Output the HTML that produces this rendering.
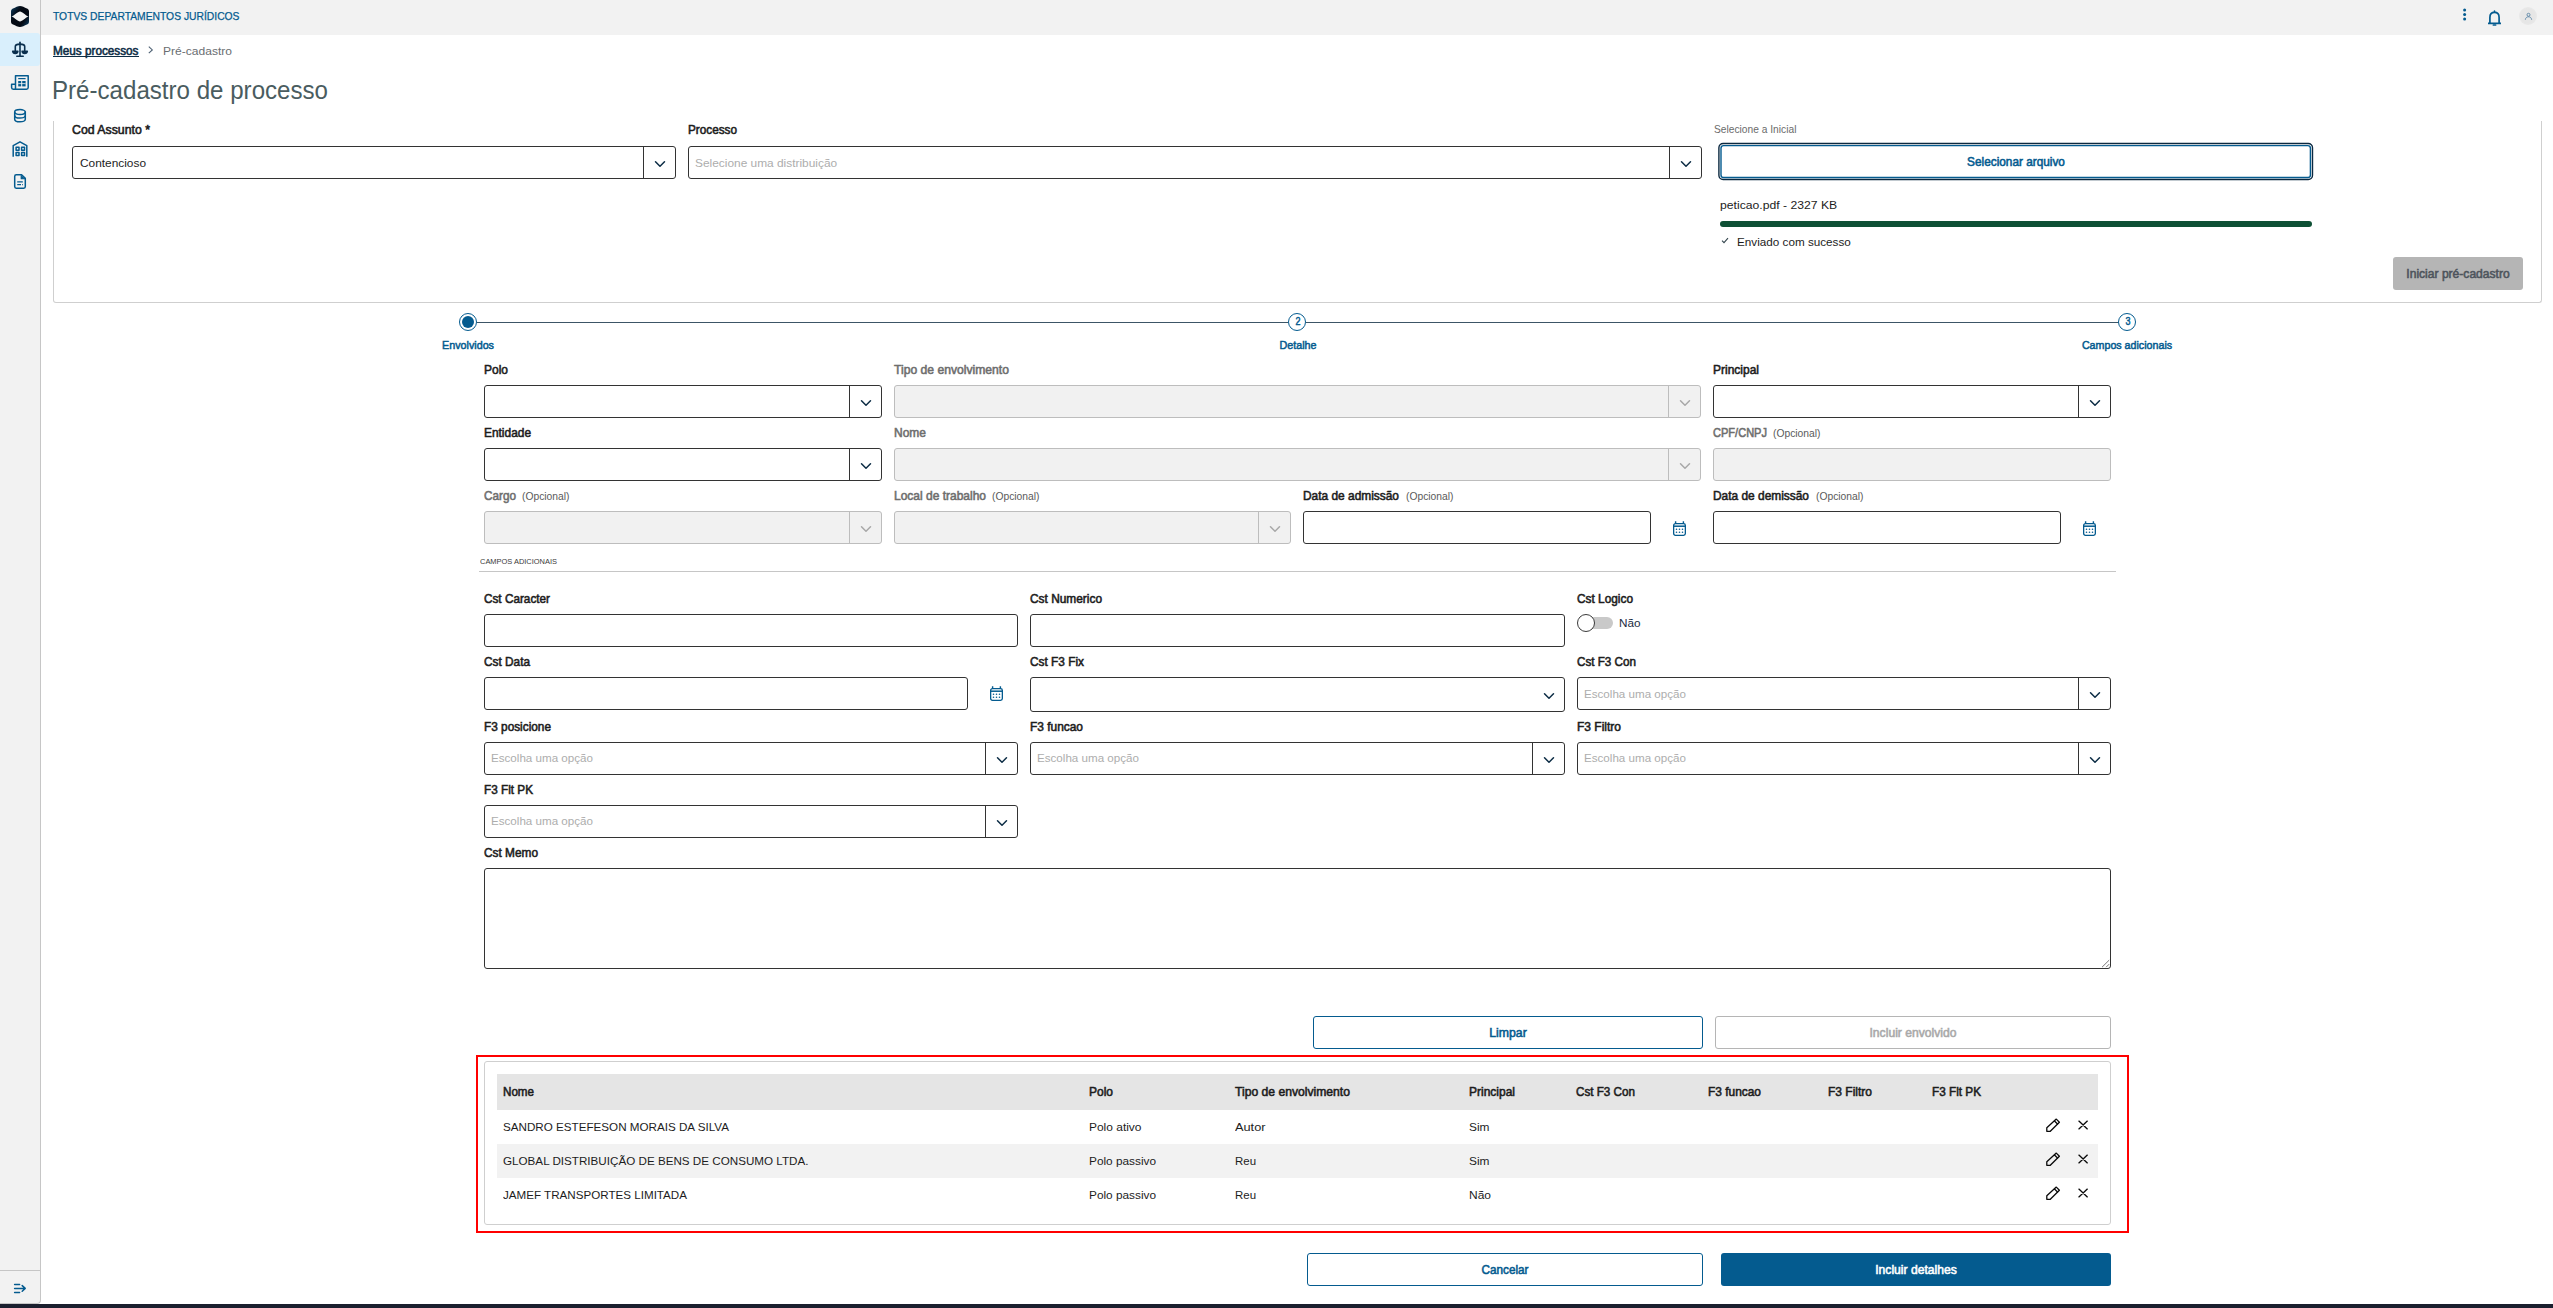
<!DOCTYPE html>
<html lang="pt-BR"><head><meta charset="utf-8"><title>Pré-cadastro de processo</title>
<style>
html,body{margin:0;padding:0}
body{width:2553px;height:1308px;position:relative;overflow:hidden;background:#fff;font-family:"Liberation Sans", sans-serif;}
div,svg,span{position:absolute;box-sizing:border-box}
.ic{overflow:visible}
.t{white-space:nowrap;line-height:20px;transform-origin:0 0}
.hdr{left:0;top:0;width:2553px;height:35px;background:#f2f2f2}
.side{left:0;top:0;width:41px;height:1304px;background:#f2f2f2;border-right:1px solid #c6c6c6;border-bottom:1px solid #c6c6c6;border-bottom-right-radius:4px}
.sideline{display:none}
.act{left:0;top:33px;width:40px;height:33px;background:#d9effc;border-radius:0 3px 3px 0}
.sidehr{left:0;top:1270px;width:40px;height:1px;background:#c6c6c6}
.botbar{left:0;top:1304px;width:2553px;height:4px;background:#1a1f2e}
.avatar{left:2519px;top:7px;width:18px;height:18px;border-radius:50%;background:radial-gradient(circle,#e6e6e6 55%,#eeeeee 100%)}
.panel{left:53px;top:121px;width:2489px;height:182px;border:1px solid #cfcfcf;border-top:none;border-radius:0 0 3px 3px}
.inp{border:1px solid #333;border-radius:3px;background:#fff}
.inp.dis{border-color:#bdbdbd;background:#f1f1f1}
.sep{width:1px;background:#333}
.sepd{background:#bdbdbd}
.btnfocus{border:1px solid #045b8f;border-radius:4px;background:#fff;box-shadow:inset 0 0 0 1px #fff, inset 0 0 0 2px #0c2c45}
.prog{left:1720px;top:221px;width:592px;height:6px;border-radius:3px;background:#0e5035}
.btngray{background:#b5b5b5;border-radius:3px}
.stepline{top:322px;height:1px;background:#3c5566}
.stepc{width:18px;height:18px;border-radius:50%;border:1px solid #045b8f;background:#fff}
.stepfill{left:2px;top:2px;width:12px;height:12px;border-radius:50%;background:#045b8f}
.hr{height:1px;background:#c6c6c6}
.swtrack{left:1588px;top:617px;width:25px;height:12px;border-radius:6px;background:#c9c9c9}
.swknob{left:1577px;top:614px;width:18px;height:18px;border-radius:50%;background:#fff;border:1px solid #3a3a3a}
.btnout{border:1px solid #045b8f;border-radius:3px;background:#fff}
.btnoutd{border-color:#b5b5b5}
.btnpri{background:#045b8f;border-radius:3px}
.red{left:476px;top:1055px;width:1653px;height:178px;border:2px solid #ff0000}
.tblbox{left:484px;top:1061px;width:1627px;height:164px;border:1px solid #cfcfcf;border-radius:3px}
.th{left:497px;top:1074px;width:1601px;height:36px;background:#e5e5e5}
.tr2{left:497px;top:1144px;width:1601px;height:34px;background:#f2f2f2}
</style></head>
<body>
<section aria-label="Layout">
<div class="hdr"></div>
<div class="side"></div>
<div class="act"></div>
<div class="sidehr"></div>
<div class="botbar"></div>
</section>
<nav aria-label="Menu">
<svg class="ic" style="left:10px;top:5px" width="20" height="23" viewBox="0 0 20 23"><linearGradient id="lg" x1="0" y1="0.1" x2="1" y2="0.9"><stop offset="0" stop-color="#0b3a5c"/><stop offset="0.33" stop-color="#040a14"/><stop offset="0.72" stop-color="#040a14"/><stop offset="1" stop-color="#0b3a5c"/></linearGradient><path d="M1 6.5 C1 4.8 1.6 4 3 3.4 C5.5 2.3 8 0.9 10 0.9 C12 0.9 14.5 2.3 17 3.4 C18.4 4 19 4.8 19 6.5 V16.5 C19 18.2 18.4 19 17 19.6 C14.5 20.7 12 22.1 10 22.1 C8 22.1 5.5 20.7 3 19.6 C1.6 19 1 18.2 1 16.5 Z" fill="url(#lg)"/><path d="M1.5 11.4 C5 10 7.6 6.5 10 6.4 C12.4 6.5 15 10 18.5 11.4 C15 12.8 12.4 16.3 10 16.4 C7.6 16.3 5 12.8 1.5 11.4 Z" fill="#f4f4f4"/></svg>
<svg class="ic" style="left:11px;top:41px" width="18" height="17" viewBox="0 0 18 17" fill="none" stroke="#0a2f4d" stroke-width="1.6" stroke-linecap="round" stroke-linejoin="round"><path d="M9 1.2 V15"/><path d="M5.8 15.3 H12.2"/><path d="M4.3 9.6 V5.6 C4.3 3.8 6 3.1 9 3.1 C12 3.1 13.7 3.8 13.7 5.6 V9.6"/><path d="M1.7 10.2 H6.9 C6.7 11.7 5.6 12.4 4.3 12.4 C3 12.4 1.9 11.7 1.7 10.2 Z" fill="#0a2f4d"/><path d="M11.1 10.2 H16.3 C16.1 11.7 15 12.4 13.7 12.4 C12.4 12.4 11.3 11.7 11.1 10.2 Z" fill="#0a2f4d"/></svg>
<svg class="ic" style="left:10px;top:74px" width="20" height="17" viewBox="0 0 20 17" fill="none" stroke="#045b8f" stroke-width="1.5" stroke-linejoin="round"><path d="M5.5 15.2 V1.8 H18.2 V13.5 C18.2 14.6 17.5 15.2 16.5 15.2 H3.2 C2.2 15.2 1.6 14.6 1.6 13.6 V10.2 H5.5"/><path d="M8.2 4.6 H15.6" stroke-width="1.2"/><rect x="8.2" y="7" width="3" height="5.4" fill="#045b8f" stroke="none"/><rect x="12.2" y="7" width="3.4" height="5.4" fill="#045b8f" stroke="none"/><path d="M8.2 9.6 H15.6" stroke="#f2f2f2" stroke-width=".8"/></svg>
<svg class="ic" style="left:13px;top:108px" width="14" height="15" viewBox="0 0 14 15" fill="none" stroke="#045b8f" stroke-width="1.5"><ellipse cx="7" cy="4.1" rx="5.3" ry="2.5"/><path d="M1.7 4.1 V11.2 C1.7 12.7 4 13.8 7 13.8 C10 13.8 12.3 12.7 12.3 11.2 V3.6"/><path d="M1.7 7.4 C1.7 8.9 4 10 7 10 C10 10 12.3 8.9 12.3 7.4"/></svg>
<svg class="ic" style="left:11px;top:140px" width="18" height="18" viewBox="0 0 18 18" fill="none" stroke="#045b8f" stroke-width="1.5" stroke-linejoin="round"><path d="M2.2 16.8 V5.6 L9 1.8 L15.8 5.6 V16.8"/><rect x="5.1" y="7.3" width="2.9" height="2.9"/><rect x="10.6" y="7.3" width="2.9" height="2.9"/><rect x="5.1" y="12.6" width="2.9" height="2.9"/><rect x="10.6" y="12.6" width="2.9" height="2.9"/></svg>
<svg class="ic" style="left:13px;top:173px" width="14" height="17" viewBox="0 0 14 17" fill="none" stroke="#045b8f" stroke-width="1.5" stroke-linejoin="round"><path d="M3.2 1.8 H8.6 L12.3 5.4 V13.6 C12.3 14.6 11.7 15.2 10.8 15.2 H3.2 C2.3 15.2 1.7 14.6 1.7 13.6 V3.4 C1.7 2.4 2.3 1.8 3.2 1.8 Z"/><path d="M8.2 2.2 V5.8 H12" stroke-width="1.1" fill="#045b8f"/><path d="M4.2 8.8 H9.8 M4.2 11.6 H8 M9 11.6 H9.8" stroke-width="1.3"/></svg>
<svg class="ic" style="left:13px;top:1282px" width="14" height="13" viewBox="0 0 14 13" fill="none" stroke="#045b8f" stroke-width="1.5" stroke-linecap="round" stroke-linejoin="round"><path d="M1.6 2.4 H6.6 M1.6 6.4 H12 M1.6 10.4 H6.6 M9.2 3.6 L12.2 6.4 L9.2 9.2"/></svg>
</nav>
<header>
<svg class="ic" style="left:2460px;top:7px" width="10" height="16" viewBox="0 0 10 16" fill="#045b8f"><circle cx="4.6" cy="2.9" r="1.5"/><circle cx="4.6" cy="7.5" r="1.5"/><circle cx="4.6" cy="12.1" r="1.5"/></svg>
<svg class="ic" style="left:2486px;top:8.6px" width="17" height="19" viewBox="0 0 17 19" fill="none" stroke="#045b8f" stroke-width="1.7" stroke-linejoin="round"><path d="M2 14.4 H15 M3.9 14.4 V8.4 C3.9 5.4 5.8 3.4 8.5 3.4 C11.2 3.4 13.1 5.4 13.1 8.4 V14.4"/><path d="M8.5 3.2 V2.2 M7.4 16 H9.6" stroke-linecap="round"/></svg>
<div class="avatar"></div><svg class="ic" style="left:2524px;top:12px" width="9" height="9" viewBox="0 0 9 9" fill="none" stroke="#3a6f98" stroke-width="0.7"><circle cx="4.5" cy="2.8" r="1.5"/><path d="M1.3 7.8 C1.6 5.6 3 4.8 4.5 4.8 C6 4.8 7.4 5.6 7.7 7.8"/></svg>
<span class="t" style="left:53px;top:6px;font-size:11.5px;color:#045b8f;transform:scaleX(0.8971);-webkit-text-stroke:0.25px #045b8f">TOTVS DEPARTAMENTOS JURÍDICOS</span>
</header>
<nav aria-label="Breadcrumb">
<div style="left:53px;top:56px;width:86px;height:1px;background:#0c2c45"></div>
<svg class="ic" style="left:147px;top:45px" width="7" height="10" viewBox="0 0 7 10" fill="none" stroke="#4f6275" stroke-width="1.1"><path d="M1.8 1.6 L5.3 4.9 L1.8 8.2"/></svg>
<span class="t" style="left:53px;top:41px;font-size:12px;color:#0c2c45;-webkit-text-stroke:0.55px #0c2c45;transform:scaleX(0.9785);">Meus processos</span>
<span class="t" style="left:163px;top:41px;font-size:11px;color:#6a6e72;transform:scaleX(1.0955);">Pré-cadastro</span>
</nav>
<main>

<span class="t" style="left:52.4px;top:80px;font-size:26.5px;color:#4a5c60;transform:scaleX(0.9096);">Pré-cadastro de processo</span>
</main>
<section aria-label="Pré-cadastro">
<div class="panel"></div>
<div class="inp" style="left:72px;top:146px;width:604px;height:33px"></div>
<div class="sep" style="left:643px;top:147px;height:31px"></div>
<svg class="ic" style="left:653.5px;top:159.5px" width="12" height="8" viewBox="0 0 12 8" fill="none" stroke="#0c2c45" stroke-width="1.5" stroke-linecap="round" stroke-linejoin="round"><path d="M1.5 1.7 L6 6.2 L10.5 1.7"/></svg>
<div class="inp" style="left:688px;top:146px;width:1014px;height:33px"></div>
<div class="sep" style="left:1669px;top:147px;height:31px"></div>
<svg class="ic" style="left:1679.5px;top:159.5px" width="12" height="8" viewBox="0 0 12 8" fill="none" stroke="#0c2c45" stroke-width="1.5" stroke-linecap="round" stroke-linejoin="round"><path d="M1.5 1.7 L6 6.2 L10.5 1.7"/></svg>
<svg class="ic" style="left:1716px;top:141px" width="600" height="42" viewBox="1716 141 600 42" fill="none"><rect x="1718.9" y="143.5" width="593.6" height="36.05" rx="4.2" stroke="#0b2840" stroke-width="1.4" fill="#fff"/><rect x="1721" y="145.6" width="589.4" height="31.95" rx="2.6" stroke="#045b8f" stroke-width="1.4"/></svg>
<div class="prog"></div>
<svg class="ic" style="left:1721px;top:237px" width="8" height="7" viewBox="0 0 8 7" fill="none" stroke="#33454d" stroke-width="1.1"><path d="M1 3.6 L3 5.6 L7 1.2"/></svg>
<div class="btngray" style="left:2393px;top:257px;width:130px;height:33px"></div>
<span class="t" style="left:72px;top:120px;font-size:12px;color:#1d1d1d;-webkit-text-stroke:0.55px #1d1d1d;transform:scaleX(1.0255);">Cod Assunto *</span>
<span class="t" style="left:79.5px;top:153px;font-size:11.5px;color:#1d1d1d;transform:scaleX(1.0323);">Contencioso</span>
<span class="t" style="left:688px;top:120px;font-size:12px;color:#1d1d1d;-webkit-text-stroke:0.55px #1d1d1d;transform:scaleX(0.9794);">Processo</span>
<span class="t" style="left:695px;top:153px;font-size:11.5px;color:#adadad;transform:scaleX(1.0345);">Selecione uma distribuição</span>
<span class="t" style="left:1714px;top:119px;font-size:11.5px;color:#6b6b6b;transform:scaleX(0.8889);">Selecione a Inicial</span>
<span class="t" style="left:2015.8px;top:152px;font-size:12px;color:#045b8f;-webkit-text-stroke:0.55px #045b8f;transform:translateX(-50%) scaleX(0.9838);transform-origin:50% 0;">Selecionar arquivo</span>
<span class="t" style="left:1720.3px;top:195px;font-size:11px;color:#1d1d1d;transform:scaleX(1.1078);">peticao.pdf - 2327 KB</span>
<span class="t" style="left:1737px;top:232px;font-size:11px;color:#1d1d1d;transform:scaleX(1.0636);">Enviado com sucesso</span>
<span class="t" style="left:2458px;top:264px;font-size:12px;color:#4d545c;-webkit-text-stroke:0.55px #4d545c;transform:translateX(-50%) scaleX(1.0066);transform-origin:50% 0;">Iniciar pré-cadastro</span>
</section>
<section aria-label="Etapas">
<div class="stepline" style="left:477px;width:811px"></div>
<div class="stepline" style="left:1306px;width:813px"></div>
<div class="stepc" style="left:459px;top:313px"><div class="stepfill"></div></div>
<div class="stepc" style="left:1288px;top:313px"></div>
<div class="stepc" style="left:2118px;top:313px"></div>
<span class="t" style="left:1297.6px;top:312px;font-size:10px;color:#045b8f;-webkit-text-stroke:0.46px #045b8f;transform:translateX(-50%) scaleX(0.8989);transform-origin:50% 0;">2</span>
<span class="t" style="left:2127.6px;top:312px;font-size:10px;color:#045b8f;-webkit-text-stroke:0.46px #045b8f;transform:translateX(-50%) scaleX(0.8989);transform-origin:50% 0;">3</span>
<span class="t" style="left:468px;top:335px;font-size:11px;color:#045b8f;-webkit-text-stroke:0.50px #045b8f;transform:translateX(-50%) scaleX(0.9774);transform-origin:50% 0;">Envolvidos</span>
<span class="t" style="left:1297.5px;top:335px;font-size:11px;color:#045b8f;-webkit-text-stroke:0.50px #045b8f;transform:translateX(-50%) scaleX(0.9757);transform-origin:50% 0;">Detalhe</span>
<span class="t" style="left:2127.1px;top:335px;font-size:11px;color:#045b8f;-webkit-text-stroke:0.50px #045b8f;transform:translateX(-50%) scaleX(0.9705);transform-origin:50% 0;">Campos adicionais</span>
</section>
<form>
<div class="inp" style="left:484px;top:385px;width:398px;height:33px"></div>
<div class="sep" style="left:849px;top:386px;height:31px"></div>
<svg class="ic" style="left:859.5px;top:398.5px" width="12" height="8" viewBox="0 0 12 8" fill="none" stroke="#0c2c45" stroke-width="1.5" stroke-linecap="round" stroke-linejoin="round"><path d="M1.5 1.7 L6 6.2 L10.5 1.7"/></svg>
<div class="inp dis" style="left:894px;top:385px;width:807px;height:33px"></div>
<div class="sep sepd" style="left:1668px;top:386px;height:31px"></div>
<svg class="ic" style="left:1678.5px;top:398.5px" width="12" height="8" viewBox="0 0 12 8" fill="none" stroke="#a8a8a8" stroke-width="1.5" stroke-linecap="round" stroke-linejoin="round"><path d="M1.5 1.7 L6 6.2 L10.5 1.7"/></svg>
<div class="inp" style="left:1713px;top:385px;width:398px;height:33px"></div>
<div class="sep" style="left:2078px;top:386px;height:31px"></div>
<svg class="ic" style="left:2088.5px;top:398.5px" width="12" height="8" viewBox="0 0 12 8" fill="none" stroke="#0c2c45" stroke-width="1.5" stroke-linecap="round" stroke-linejoin="round"><path d="M1.5 1.7 L6 6.2 L10.5 1.7"/></svg>
<div class="inp" style="left:484px;top:448px;width:398px;height:33px"></div>
<div class="sep" style="left:849px;top:449px;height:31px"></div>
<svg class="ic" style="left:859.5px;top:461.5px" width="12" height="8" viewBox="0 0 12 8" fill="none" stroke="#0c2c45" stroke-width="1.5" stroke-linecap="round" stroke-linejoin="round"><path d="M1.5 1.7 L6 6.2 L10.5 1.7"/></svg>
<div class="inp dis" style="left:894px;top:448px;width:807px;height:33px"></div>
<div class="sep sepd" style="left:1668px;top:449px;height:31px"></div>
<svg class="ic" style="left:1678.5px;top:461.5px" width="12" height="8" viewBox="0 0 12 8" fill="none" stroke="#a8a8a8" stroke-width="1.5" stroke-linecap="round" stroke-linejoin="round"><path d="M1.5 1.7 L6 6.2 L10.5 1.7"/></svg>
<div class="inp dis" style="left:1713px;top:448px;width:398px;height:33px"></div>
<div class="inp dis" style="left:484px;top:511px;width:398px;height:33px"></div>
<div class="sep sepd" style="left:849px;top:512px;height:31px"></div>
<svg class="ic" style="left:859.5px;top:524.5px" width="12" height="8" viewBox="0 0 12 8" fill="none" stroke="#a8a8a8" stroke-width="1.5" stroke-linecap="round" stroke-linejoin="round"><path d="M1.5 1.7 L6 6.2 L10.5 1.7"/></svg>
<div class="inp dis" style="left:894px;top:511px;width:397px;height:33px"></div>
<div class="sep sepd" style="left:1258px;top:512px;height:31px"></div>
<svg class="ic" style="left:1268.5px;top:524.5px" width="12" height="8" viewBox="0 0 12 8" fill="none" stroke="#a8a8a8" stroke-width="1.5" stroke-linecap="round" stroke-linejoin="round"><path d="M1.5 1.7 L6 6.2 L10.5 1.7"/></svg>
<div class="inp" style="left:1303px;top:511px;width:348px;height:33px"></div>
<svg class="ic" style="left:1672px;top:520px" width="15" height="17" viewBox="0 0 15 17" fill="none" stroke="#045b8f" stroke-width="1.3"><rect x="1.65" y="3.65" width="11.7" height="11.7" rx="1.8"/><path d="M1.4 6.2 H13.6" stroke-width="1.5"/><path d="M3.6 1.2 V3.4 M11.4 1.2 V3.4" stroke-width="1.4"/><g fill="#045b8f" stroke="none"><circle cx="4.5" cy="9.2" r=".8"/><circle cx="7.5" cy="9.2" r=".8"/><circle cx="10.5" cy="9.2" r=".8"/><circle cx="4.5" cy="12.3" r=".8"/><circle cx="7.5" cy="12.3" r=".8"/><circle cx="10.5" cy="12.3" r=".8"/></g></svg>
<div class="inp" style="left:1713px;top:511px;width:348px;height:33px"></div>
<svg class="ic" style="left:2082px;top:520px" width="15" height="17" viewBox="0 0 15 17" fill="none" stroke="#045b8f" stroke-width="1.3"><rect x="1.65" y="3.65" width="11.7" height="11.7" rx="1.8"/><path d="M1.4 6.2 H13.6" stroke-width="1.5"/><path d="M3.6 1.2 V3.4 M11.4 1.2 V3.4" stroke-width="1.4"/><g fill="#045b8f" stroke="none"><circle cx="4.5" cy="9.2" r=".8"/><circle cx="7.5" cy="9.2" r=".8"/><circle cx="10.5" cy="9.2" r=".8"/><circle cx="4.5" cy="12.3" r=".8"/><circle cx="7.5" cy="12.3" r=".8"/><circle cx="10.5" cy="12.3" r=".8"/></g></svg>
<div class="hr" style="left:479px;top:571px;width:1637px"></div>
<div class="inp" style="left:484px;top:614px;width:534px;height:33px"></div>
<div class="inp" style="left:1030px;top:614px;width:535px;height:33px"></div>
<div class="swtrack"></div><div class="swknob"></div>
<div class="inp" style="left:484px;top:677px;width:484px;height:33px"></div>
<svg class="ic" style="left:989px;top:685px" width="15" height="17" viewBox="0 0 15 17" fill="none" stroke="#045b8f" stroke-width="1.3"><rect x="1.65" y="3.65" width="11.7" height="11.7" rx="1.8"/><path d="M1.4 6.2 H13.6" stroke-width="1.5"/><path d="M3.6 1.2 V3.4 M11.4 1.2 V3.4" stroke-width="1.4"/><g fill="#045b8f" stroke="none"><circle cx="4.5" cy="9.2" r=".8"/><circle cx="7.5" cy="9.2" r=".8"/><circle cx="10.5" cy="9.2" r=".8"/><circle cx="4.5" cy="12.3" r=".8"/><circle cx="7.5" cy="12.3" r=".8"/><circle cx="10.5" cy="12.3" r=".8"/></g></svg>
<div class="inp" style="left:1030px;top:677px;width:535px;height:35px"></div>
<svg class="ic" style="left:1542.5px;top:691.5px" width="12" height="8" viewBox="0 0 12 8" fill="none" stroke="#0c2c45" stroke-width="1.5" stroke-linecap="round" stroke-linejoin="round"><path d="M1.5 1.7 L6 6.2 L10.5 1.7"/></svg>
<div class="inp" style="left:1577px;top:677px;width:534px;height:33px"></div>
<div class="sep" style="left:2078px;top:678px;height:31px"></div>
<svg class="ic" style="left:2088.5px;top:690.5px" width="12" height="8" viewBox="0 0 12 8" fill="none" stroke="#0c2c45" stroke-width="1.5" stroke-linecap="round" stroke-linejoin="round"><path d="M1.5 1.7 L6 6.2 L10.5 1.7"/></svg>
<div class="inp" style="left:484px;top:742px;width:534px;height:33px"></div>
<div class="sep" style="left:985px;top:743px;height:31px"></div>
<svg class="ic" style="left:995.5px;top:755.5px" width="12" height="8" viewBox="0 0 12 8" fill="none" stroke="#0c2c45" stroke-width="1.5" stroke-linecap="round" stroke-linejoin="round"><path d="M1.5 1.7 L6 6.2 L10.5 1.7"/></svg>
<div class="inp" style="left:1030px;top:742px;width:535px;height:33px"></div>
<div class="sep" style="left:1532px;top:743px;height:31px"></div>
<svg class="ic" style="left:1542.5px;top:755.5px" width="12" height="8" viewBox="0 0 12 8" fill="none" stroke="#0c2c45" stroke-width="1.5" stroke-linecap="round" stroke-linejoin="round"><path d="M1.5 1.7 L6 6.2 L10.5 1.7"/></svg>
<div class="inp" style="left:1577px;top:742px;width:534px;height:33px"></div>
<div class="sep" style="left:2078px;top:743px;height:31px"></div>
<svg class="ic" style="left:2088.5px;top:755.5px" width="12" height="8" viewBox="0 0 12 8" fill="none" stroke="#0c2c45" stroke-width="1.5" stroke-linecap="round" stroke-linejoin="round"><path d="M1.5 1.7 L6 6.2 L10.5 1.7"/></svg>
<div class="inp" style="left:484px;top:805px;width:534px;height:33px"></div>
<div class="sep" style="left:985px;top:806px;height:31px"></div>
<svg class="ic" style="left:995.5px;top:818.5px" width="12" height="8" viewBox="0 0 12 8" fill="none" stroke="#0c2c45" stroke-width="1.5" stroke-linecap="round" stroke-linejoin="round"><path d="M1.5 1.7 L6 6.2 L10.5 1.7"/></svg>
<div class="inp" style="left:484px;top:868px;width:1627px;height:101px"></div>
<svg class="ic" style="left:2100.8px;top:958.8px" width="9" height="9" viewBox="0 0 9 9" stroke="#555" stroke-width="0.8" stroke-linecap="round"><path d="M7.9 1.4 L1.3 7.9 M7.9 5.4 L5.4 7.9"/></svg>
<div class="btnout" style="left:1313px;top:1016px;width:390px;height:33px"></div>
<div class="btnout btnoutd" style="left:1715px;top:1016px;width:396px;height:33px"></div>
<span class="t" style="left:484px;top:360px;font-size:12px;color:#1d1d1d;-webkit-text-stroke:0.55px #1d1d1d;transform:scaleX(0.9987);">Polo</span>
<span class="t" style="left:894px;top:360px;font-size:12px;color:#6e6e6e;-webkit-text-stroke:0.55px #6e6e6e;transform:scaleX(1.0121);">Tipo de envolvimento</span>
<span class="t" style="left:1713px;top:360px;font-size:12px;color:#1d1d1d;-webkit-text-stroke:0.55px #1d1d1d;transform:scaleX(0.9993);">Principal</span>
<span class="t" style="left:484px;top:423px;font-size:12px;color:#1d1d1d;-webkit-text-stroke:0.55px #1d1d1d;transform:scaleX(0.9921);">Entidade</span>
<span class="t" style="left:894px;top:423px;font-size:12px;color:#6e6e6e;-webkit-text-stroke:0.55px #6e6e6e;transform:scaleX(0.9995);">Nome</span>
<span class="t" style="left:1713px;top:423px;font-size:12px;color:#6e6e6e;-webkit-text-stroke:0.55px #6e6e6e;transform:scaleX(0.9204);">CPF/CNPJ</span>
<span class="t" style="left:1773px;top:423px;font-size:11.5px;color:#5a5a5a;transform:scaleX(0.8952);">(Opcional)</span>
<span class="t" style="left:484px;top:486px;font-size:12px;color:#6e6e6e;-webkit-text-stroke:0.55px #6e6e6e;transform:scaleX(0.9790);">Cargo</span>
<span class="t" style="left:522px;top:486px;font-size:11.5px;color:#5a5a5a;transform:scaleX(0.8952);">(Opcional)</span>
<span class="t" style="left:894px;top:486px;font-size:12px;color:#6e6e6e;-webkit-text-stroke:0.55px #6e6e6e;transform:scaleX(0.9992);">Local de trabalho</span>
<span class="t" style="left:992px;top:486px;font-size:11.5px;color:#5a5a5a;transform:scaleX(0.8952);">(Opcional)</span>
<span class="t" style="left:1303px;top:486px;font-size:12px;color:#1d1d1d;-webkit-text-stroke:0.55px #1d1d1d;transform:scaleX(0.9924);">Data de admissão</span>
<span class="t" style="left:1406px;top:486px;font-size:11.5px;color:#5a5a5a;transform:scaleX(0.8952);">(Opcional)</span>
<span class="t" style="left:1713px;top:486px;font-size:12px;color:#1d1d1d;-webkit-text-stroke:0.55px #1d1d1d;transform:scaleX(0.9924);">Data de demissão</span>
<span class="t" style="left:1815.5px;top:486px;font-size:11.5px;color:#5a5a5a;transform:scaleX(0.8952);">(Opcional)</span>
<span class="t" style="left:479.5px;top:552px;font-size:8px;color:#3a3a3a;transform:scaleX(0.9312);">CAMPOS ADICIONAIS</span>
<span class="t" style="left:484px;top:589px;font-size:12px;color:#1d1d1d;-webkit-text-stroke:0.55px #1d1d1d;transform:scaleX(0.9798);">Cst Caracter</span>
<span class="t" style="left:1030px;top:589px;font-size:12px;color:#1d1d1d;-webkit-text-stroke:0.55px #1d1d1d;transform:scaleX(0.9905);">Cst Numerico</span>
<span class="t" style="left:1577px;top:589px;font-size:12px;color:#1d1d1d;-webkit-text-stroke:0.55px #1d1d1d;transform:scaleX(0.9876);">Cst Logico</span>
<span class="t" style="left:1619px;top:613px;font-size:11.5px;color:#1b2c42;transform:scaleX(1.0185);">Não</span>
<span class="t" style="left:484px;top:652px;font-size:12px;color:#1d1d1d;-webkit-text-stroke:0.55px #1d1d1d;transform:scaleX(0.9853);">Cst Data</span>
<span class="t" style="left:1030px;top:652px;font-size:12px;color:#1d1d1d;-webkit-text-stroke:0.55px #1d1d1d;transform:scaleX(0.9877);">Cst F3 Fix</span>
<span class="t" style="left:1577px;top:652px;font-size:12px;color:#1d1d1d;-webkit-text-stroke:0.55px #1d1d1d;transform:scaleX(0.9722);">Cst F3 Con</span>
<span class="t" style="left:1584px;top:684px;font-size:11.5px;color:#adadad;transform:scaleX(1.0097);">Escolha uma opção</span>
<span class="t" style="left:484px;top:717px;font-size:12px;color:#1d1d1d;-webkit-text-stroke:0.55px #1d1d1d;transform:scaleX(0.9846);">F3 posicione</span>
<span class="t" style="left:491px;top:748px;font-size:11.5px;color:#adadad;transform:scaleX(1.0097);">Escolha uma opção</span>
<span class="t" style="left:1030px;top:717px;font-size:12px;color:#1d1d1d;-webkit-text-stroke:0.55px #1d1d1d;transform:scaleX(0.9930);">F3 funcao</span>
<span class="t" style="left:1037px;top:748px;font-size:11.5px;color:#adadad;transform:scaleX(1.0097);">Escolha uma opção</span>
<span class="t" style="left:1577px;top:717px;font-size:12px;color:#1d1d1d;-webkit-text-stroke:0.55px #1d1d1d;transform:scaleX(0.9996);">F3 Filtro</span>
<span class="t" style="left:1584px;top:748px;font-size:11.5px;color:#adadad;transform:scaleX(1.0097);">Escolha uma opção</span>
<span class="t" style="left:484px;top:780px;font-size:12px;color:#1d1d1d;-webkit-text-stroke:0.55px #1d1d1d;transform:scaleX(0.9797);">F3 Flt PK</span>
<span class="t" style="left:491px;top:811px;font-size:11.5px;color:#adadad;transform:scaleX(1.0097);">Escolha uma opção</span>
<span class="t" style="left:484px;top:843px;font-size:12px;color:#1d1d1d;-webkit-text-stroke:0.55px #1d1d1d;transform:scaleX(0.9874);">Cst Memo</span>
<span class="t" style="left:1508.2px;top:1023px;font-size:12px;color:#045b8f;-webkit-text-stroke:0.55px #045b8f;transform:translateX(-50%) scaleX(1.0221);transform-origin:50% 0;">Limpar</span>
<span class="t" style="left:1912.8px;top:1023px;font-size:12px;color:#a9a9a9;-webkit-text-stroke:0.55px #a9a9a9;transform:translateX(-50%) scaleX(1.0111);transform-origin:50% 0;">Incluir envolvido</span>
</form>
<section aria-label="Envolvidos">
<div class="red"></div>
<div class="tblbox"></div>
<div class="th"></div>
<div class="tr2"></div>
<svg class="ic" style="left:2045.1px;top:1116.8px" width="16" height="16" viewBox="0 0 16 16" fill="none" stroke="#0a0a0a" stroke-width="1.3" stroke-linejoin="round" stroke-linecap="round"><path d="M11.3 2.1 L14.4 5.2 L5.3 14.3 H1.8 V10.8 Z"/><path d="M9.5 4 L12.5 7"/></svg>
<svg class="ic" style="left:2077.4px;top:1118.8px" width="12" height="12" viewBox="0 0 12 12" fill="none" stroke="#0a0a0a" stroke-width="1.35" stroke-linecap="round"><path d="M1.9 2.1 L10.3 9.9 M10.3 2.1 L1.9 9.9"/></svg>
<svg class="ic" style="left:2045.1px;top:1150.8px" width="16" height="16" viewBox="0 0 16 16" fill="none" stroke="#0a0a0a" stroke-width="1.3" stroke-linejoin="round" stroke-linecap="round"><path d="M11.3 2.1 L14.4 5.2 L5.3 14.3 H1.8 V10.8 Z"/><path d="M9.5 4 L12.5 7"/></svg>
<svg class="ic" style="left:2077.4px;top:1152.8px" width="12" height="12" viewBox="0 0 12 12" fill="none" stroke="#0a0a0a" stroke-width="1.35" stroke-linecap="round"><path d="M1.9 2.1 L10.3 9.9 M10.3 2.1 L1.9 9.9"/></svg>
<svg class="ic" style="left:2045.1px;top:1184.8px" width="16" height="16" viewBox="0 0 16 16" fill="none" stroke="#0a0a0a" stroke-width="1.3" stroke-linejoin="round" stroke-linecap="round"><path d="M11.3 2.1 L14.4 5.2 L5.3 14.3 H1.8 V10.8 Z"/><path d="M9.5 4 L12.5 7"/></svg>
<svg class="ic" style="left:2077.4px;top:1186.8px" width="12" height="12" viewBox="0 0 12 12" fill="none" stroke="#0a0a0a" stroke-width="1.35" stroke-linecap="round"><path d="M1.9 2.1 L10.3 9.9 M10.3 2.1 L1.9 9.9"/></svg>
<span class="t" style="left:503px;top:1082px;font-size:12px;color:#1d1d1d;-webkit-text-stroke:0.55px #1d1d1d;transform:scaleX(0.9683);">Nome</span>
<span class="t" style="left:1089px;top:1082px;font-size:12px;color:#1d1d1d;-webkit-text-stroke:0.55px #1d1d1d;transform:scaleX(0.9987);">Polo</span>
<span class="t" style="left:1235px;top:1082px;font-size:12px;color:#1d1d1d;-webkit-text-stroke:0.55px #1d1d1d;transform:scaleX(1.0121);">Tipo de envolvimento</span>
<span class="t" style="left:1469px;top:1082px;font-size:12px;color:#1d1d1d;-webkit-text-stroke:0.55px #1d1d1d;transform:scaleX(0.9993);">Principal</span>
<span class="t" style="left:1576px;top:1082px;font-size:12px;color:#1d1d1d;-webkit-text-stroke:0.55px #1d1d1d;transform:scaleX(0.9722);">Cst F3 Con</span>
<span class="t" style="left:1708px;top:1082px;font-size:12px;color:#1d1d1d;-webkit-text-stroke:0.55px #1d1d1d;transform:scaleX(0.9930);">F3 funcao</span>
<span class="t" style="left:1828px;top:1082px;font-size:12px;color:#1d1d1d;-webkit-text-stroke:0.55px #1d1d1d;transform:scaleX(0.9996);">F3 Filtro</span>
<span class="t" style="left:1932px;top:1082px;font-size:12px;color:#1d1d1d;-webkit-text-stroke:0.55px #1d1d1d;transform:scaleX(0.9797);">F3 Flt PK</span>
<span class="t" style="left:503px;top:1117px;font-size:11px;color:#1d1d1d;transform:scaleX(1.0584);">SANDRO ESTEFESON MORAIS DA SILVA</span>
<span class="t" style="left:1089px;top:1117px;font-size:11px;color:#1d1d1d;transform:scaleX(1.0867);">Polo ativo</span>
<span class="t" style="left:1235px;top:1117px;font-size:11px;color:#1d1d1d;transform:scaleX(1.1598);">Autor</span>
<span class="t" style="left:1469px;top:1117px;font-size:11px;color:#1d1d1d;transform:scaleX(1.0816);">Sim</span>
<span class="t" style="left:503px;top:1151px;font-size:11px;color:#1d1d1d;transform:scaleX(1.0589);">GLOBAL DISTRIBUIÇÃO DE BENS DE CONSUMO LTDA.</span>
<span class="t" style="left:1089px;top:1151px;font-size:11px;color:#1d1d1d;transform:scaleX(1.0741);">Polo passivo</span>
<span class="t" style="left:1235px;top:1151px;font-size:11px;color:#1d1d1d;transform:scaleX(1.0402);">Reu</span>
<span class="t" style="left:1469px;top:1151px;font-size:11px;color:#1d1d1d;transform:scaleX(1.0816);">Sim</span>
<span class="t" style="left:503px;top:1185px;font-size:11px;color:#1d1d1d;transform:scaleX(1.0562);">JAMEF TRANSPORTES LIMITADA</span>
<span class="t" style="left:1089px;top:1185px;font-size:11px;color:#1d1d1d;transform:scaleX(1.0741);">Polo passivo</span>
<span class="t" style="left:1235px;top:1185px;font-size:11px;color:#1d1d1d;transform:scaleX(1.0402);">Reu</span>
<span class="t" style="left:1469px;top:1185px;font-size:11px;color:#1d1d1d;transform:scaleX(1.0898);">Não</span>
</section>
<footer>
<div class="btnout" style="left:1307px;top:1253px;width:396px;height:33px"></div>
<div class="btnpri" style="left:1721px;top:1253px;width:390px;height:33px"></div>
<span class="t" style="left:1504.5px;top:1260px;font-size:12px;color:#045b8f;-webkit-text-stroke:0.55px #045b8f;transform:translateX(-50%) scaleX(0.9785);transform-origin:50% 0;">Cancelar</span>
<span class="t" style="left:1916.1px;top:1260px;font-size:12px;color:#fff;-webkit-text-stroke:0.55px #fff;transform:translateX(-50%) scaleX(1.0097);transform-origin:50% 0;">Incluir detalhes</span>
</footer>
</body></html>
